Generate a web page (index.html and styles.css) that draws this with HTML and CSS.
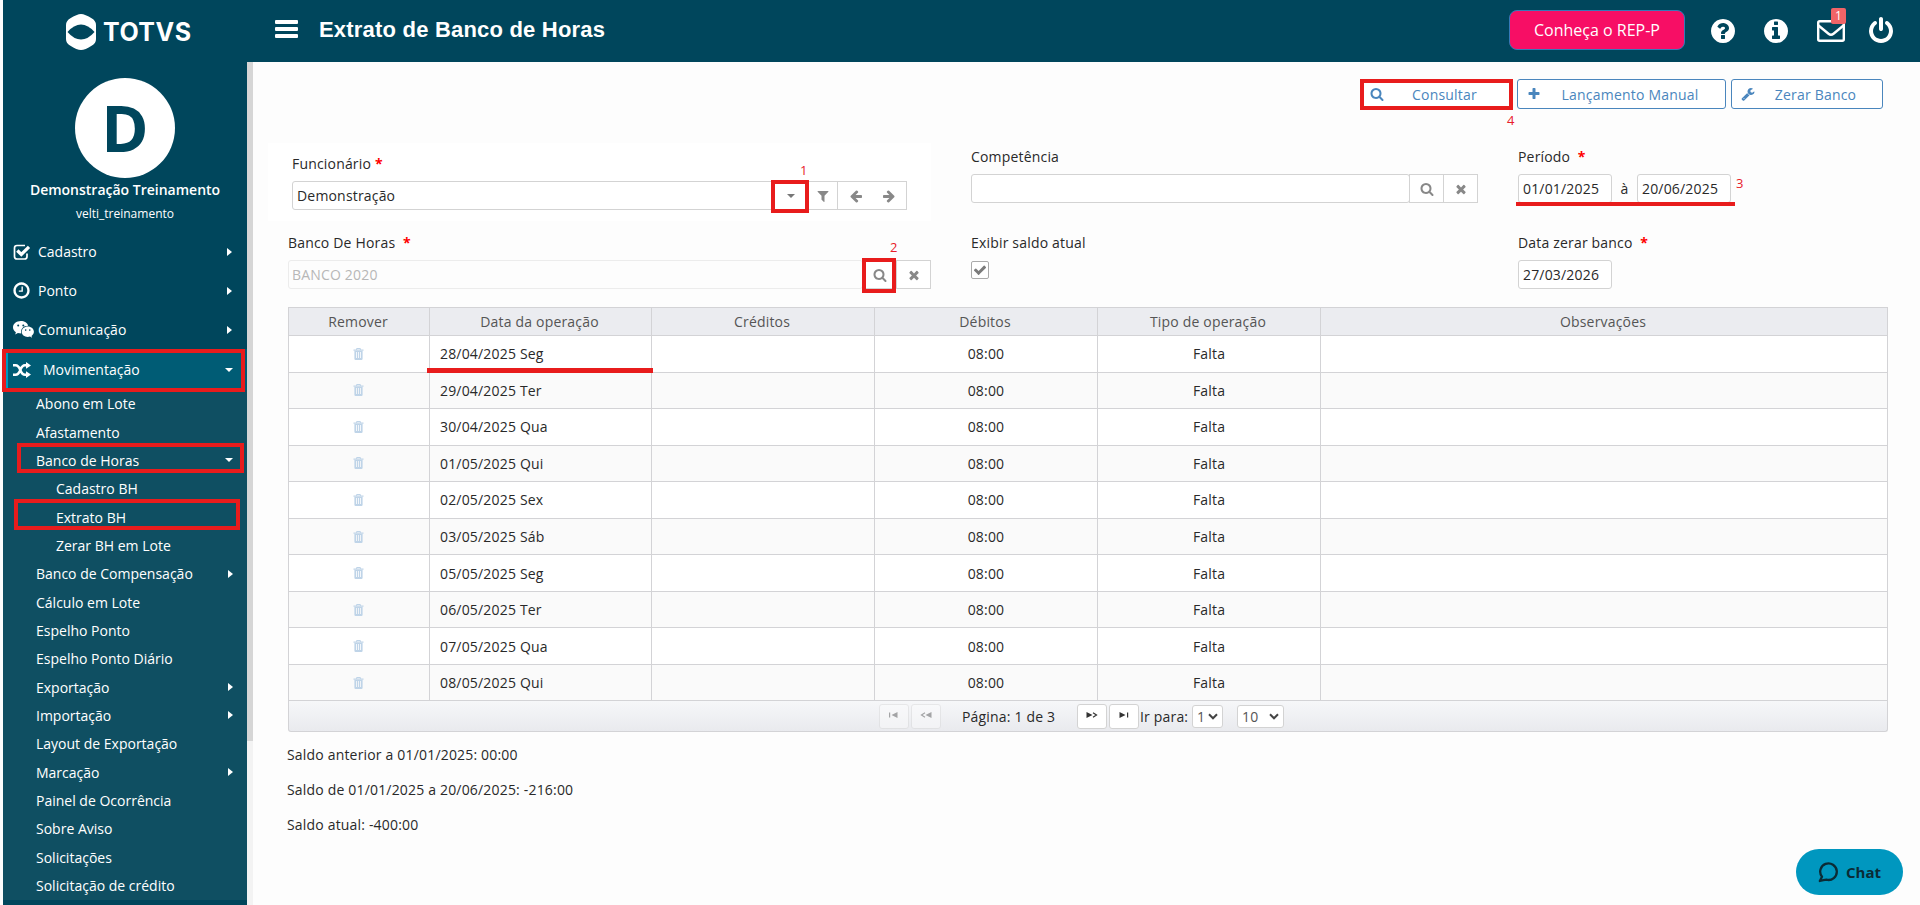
FILE: index.html
```html
<!DOCTYPE html>
<html lang="pt-BR">
<head>
    <meta charset="UTF-8">
    <meta name="viewport" content="width=device-width, initial-scale=1.0">
    <title>Extrato de Banco de Horas</title>
    <link rel="stylesheet" href="styles.css">
</head>
<body>
    <!-- Icons -->
    <svg class="sprite">
        <symbol id="i-search" viewBox="0 0 1792 1792"><path d="M1216 832q0-185-131.5-316.5t-316.5-131.5-316.5 131.5-131.5 316.5 131.5 316.5 316.5 131.5 316.5-131.5 131.5-316.5zm512 832q0 52-38 90t-90 38q-54 0-90-38l-343-342q-179 124-399 124-143 0-273.5-55.5t-225-150-150-225-55.5-273.5 55.5-273.5 150-225 225-150 273.5-55.5 273.5 55.5 225 150 150 225 55.5 273.5q0 220-124 399l343 343q37 37 37 90z"/></symbol>
        <symbol id="i-plus" viewBox="0 0 1792 1792"><path d="M1600 736v192q0 40-28 68t-68 28h-416v416q0 40-28 68t-68 28h-192q-40 0-68-28t-28-68v-416h-416q-40 0-68-28t-28-68v-192q0-40 28-68t68-28h416v-416q0-40 28-68t68-28h192q40 0 68 28t28 68v416h416q40 0 68 28t28 68z"/></symbol>
        <symbol id="i-times" viewBox="0 0 1792 1792"><path d="M1490 1322q0 40-28 68l-136 136q-28 28-68 28t-68-28l-294-294-294 294q-28 28-68 28t-68-28l-136-136q-28-28-28-68t28-68l294-294-294-294q-28-28-28-68t28-68l136-136q28-28 68-28t68 28l294 294 294-294q28-28 68-28t68 28l136 136q28 28 28 68t-28 68l-294 294 294 294q28 28 28 68z"/></symbol>
        <symbol id="i-filter" viewBox="0 0 1792 1792"><path d="M1595 295q17 41-14 70l-493 493v742q0 42-39 59-13 5-25 5-27 0-45-19l-256-256q-19-19-19-45v-486l-493-493q-31-29-14-70 17-39 59-39h1280q42 0 59 39z"/></symbol>
        <symbol id="i-left" viewBox="0 0 1792 1792"><path d="M1664 896v128q0 53-32.5 90.5t-84.5 37.5h-704l293 294q38 36 38 90t-38 90l-75 76q-37 37-90 37-52 0-91-37l-651-652q-37-37-37-90 0-52 37-91l651-650q38-38 91-38 52 0 90 38l75 74q38 38 38 91t-38 91l-293 293h704q52 0 84.5 37.5t32.5 90.5z"/></symbol>
        <symbol id="i-right" viewBox="0 0 1792 1792"><path d="M1600 960q0 54-37 91l-651 651q-39 37-91 37-51 0-90-37l-75-75q-38-38-38-91t38-91l293-293h-704q-52 0-84.5-37.5t-32.5-90.5v-128q0-53 32.5-90.5t84.5-37.5h704l-293-294q-38-36-38-90t38-90l75-75q38-38 90-38 53 0 91 38l651 651q37 35 37 90z"/></symbol>
        <symbol id="i-power" viewBox="0 0 1792 1792"><path d="M1664 896q0 156-61 298t-164 245-245 164-298 61-298-61-245-164-164-245-61-298q0-182 80.5-343t226.5-270q43-32 95.5-25t83.5 50q32 42 24.5 94.5t-49.5 84.5q-98 74-151.5 181t-53.5 228q0 104 40.5 198.5t109.5 163.5 163.5 109.5 198.5 40.5 198.5-40.5 163.5-109.5 109.5-163.5 40.5-198.5q0-121-53.5-228t-151.5-181q-42-32-49.5-84.5t24.5-94.5q31-43 84-50t95 25q146 109 226.5 270t80.5 343zm-640-768v640q0 52-38 90t-90 38-90-38-38-90v-640q0-52 38-90t90-38 90 38 38 90z"/></symbol>
        <symbol id="i-help" viewBox="0 0 1792 1792"><path d="M1024 1376v-192q0-14-9-23t-23-9h-192q-14 0-23 9t-9 23v192q0 14 9 23t23 9h192q14 0 23-9t9-23zm256-672q0-88-55.5-163t-138.5-116-170-41q-243 0-371 213-15 24 8 42l132 100q7 6 19 6 16 0 25-12 53-68 86-92 34-24 86-24 48 0 85.5 26t37.5 59q0 38-20 61t-68 45q-63 28-115.5 86.5t-52.5 125.5v36q0 14 9 23t23 9h192q14 0 23-9t9-23q0-19 21.5-49.5t54.5-49.5q32-18 49-28.5t46-35 44.5-48 28-60.5 12.5-81zm384 192q0 209-103 385.5t-279.5 279.5-385.5 103-385.5-103-279.5-279.5-103-385.5 103-385.5 279.5-279.5 385.5-103 385.5 103 279.5 279.5 103 385.5z"/></symbol>
        <symbol id="i-info" viewBox="0 0 1792 1792"><path d="M1152 1376v-160q0-14-9-23t-23-9h-96v-512q0-14-9-23t-23-9h-320q-14 0-23 9t-9 23v160q0 14 9 23t23 9h96v320h-96q-14 0-23 9t-9 23v160q0 14 9 23t23 9h448q14 0 23-9t9-23zm-128-896v-160q0-14-9-23t-23-9h-192q-14 0-23 9t-9 23v160q0 14 9 23t23 9h192q14 0 23-9t9-23zm640 416q0 209-103 385.5t-279.5 279.5-385.5 103-385.5-103-279.5-279.5-103-385.5 103-385.5 279.5-279.5 385.5-103 385.5 103 279.5 279.5 103 385.5z"/></symbol>
        <symbol id="i-wrench" viewBox="0 0 1792 1792"><path d="M448 1472q0-26-19-45t-45-19-45 19-19 45 19 45 45 19 45-19 19-45zm644-420l-682 682q-37 37-90 37-52 0-91-37l-106-108q-38-36-38-90 0-53 38-91l681-681q39 98 114.5 173.5t173.5 114.5zm634-435q0 39-23 106-47 134-164.5 217.5t-258.5 83.5q-185 0-316.5-131.5t-131.5-316.5 131.5-316.5 316.5-131.5q58 0 121.5 16.5t107.5 46.5q16 11 16 28t-16 28l-293 169v224l193 107q5-3 79-48.5t135.5-81 70.5-35.5q15 0 23.5 10t8.5 25z"/></symbol>
        <symbol id="i-check" viewBox="0 0 1792 1792"><path d="M1671 566q0 40-28 68l-724 724-136 136q-28 28-68 28t-68-28l-136-136-362-362q-28-28-28-68t28-68l136-136q28-28 68-28t68 28l294 295 656-657q28-28 68-28t68 28l136 136q28 28 28 68z"/></symbol>
        <symbol id="i-clock" viewBox="0 0 1792 1792"><path d="M1024 544v448q0 14-9 23t-23 9h-320q-14 0-23-9t-9-23v-64q0-14 9-23t23-9h224v-352q0-14 9-23t23-9h64q14 0 23 9t9 23zm416 352q0-148-73-273t-198-198-273-73-273 73-198 198-73 273 73 273 198 198 273 73 273-73 198-198 73-273zm224 0q0 209-103 385.5t-279.5 279.5-385.5 103-385.5-103-279.5-279.5-103-385.5 103-385.5 279.5-279.5 385.5-103 385.5 103 279.5 279.5 103 385.5z"/></symbol>
        <symbol id="i-trash" viewBox="0 0 10 12"><path fill-rule="evenodd" d="M0 1.5h2.6V1q0-1 1-1h2.8q1 0 1 1v.5H10v1.3H0zM3.6 1.5h2.8V1H3.600zM.9 3h8.200v7.800q0 1.200-1.200 1.200H2.100Q.9 12 .9 10.800zM2.600 4v6h.8V4zM4.600 4v6h.8V4zM6.600 4v6h.8V4z"/></symbol>
    </svg>

    <header class="top-header">
        <div class="logo">
            <svg class="logo-mark" viewBox="0 0 30 36"><path fill="#fff" d="M15 0Q19 0 26 4.500Q30 7 30 11V25Q30 29 26 31.500Q19 36 15 36Q11 36 4 31.500Q0 29 0 25V11Q0 7 4 4.500Q11 0 15 0Z"/><path fill="#00465c" d="M1.500 18Q8 10.500 15 10.500T28.500 18Q22 25.500 15 25.500T1.500 18Z"/></svg>
            <span class="logo-text">TOTVS</span>
        </div>
        <div class="menu-toggle"><span></span><span></span><span></span></div>
        <h1 class="page-title">Extrato de Banco de Horas</h1>
        <a class="rep-btn" href="#">Conheça o REP-P</a>
        <div class="header-icons">
            <svg class="h-icon"><use href="#i-help"/></svg>
            <svg class="h-icon"><use href="#i-info"/></svg>
            <div class="mail">
                <svg width="28" height="22" viewBox="0 0 28 22" fill="none" stroke="#fff" stroke-width="2.400"><rect x="1.200" y="1.200" width="25.600" height="19.600" rx="1.500"/><path d="M1.500 5.500L11.500 13.700Q14 15.700 16.500 13.700L26.500 5.500"/></svg>
                <span class="mail-count">1</span>
            </div>
            <svg class="h-icon power"><use href="#i-power"/></svg>
        </div>
    </header>

    <div class="wrapper">
        <aside class="sidebar">
            <div class="user">
                <div class="avatar">D</div>
                <div class="user-name">Demonstração Treinamento</div>
                <div class="user-login">velti_treinamento</div>
            </div>
            <ul class="menu">
                <li class="has-sub">
                    <svg class="m-icon" viewBox="0 0 17 16" fill="none"><path d="M13.500 9.500V12.500Q13.500 15 11 15H3.500Q1 15 1 12.500V4Q1 1.500 3.500 1.500H11.500" stroke="#fff" stroke-width="1.700"/><path d="M3.800 6.500L7.800 10.500L15.500 2.800" stroke="#fff" stroke-width="3.200"/></svg>Cadastro</li>
                <li class="has-sub"><svg class="m-icon clock"><use href="#i-clock"/></svg>Ponto</li>
                <li class="has-sub">
                    <svg class="m-icon chat" viewBox="0 0 21 17"><path fill="#fff" d="M7.800 0C3.500 0 0 2.800 0 6.300c0 2 1.100 3.700 2.900 4.900L2.200 13.500l2.700-1.400q1.700.4 3.400.4C7 8 10.500 4.600 15.200 4.700 14.500 1.900 11.400 0 7.800 0zM14.800 5.500c-3.400 0-6.100 2.300-6.100 5.200s2.700 5.200 6.100 5.200q1.100 0 2.200-.3l2.100 1.200-.6-1.900c1.500-1 2.400-2.500 2.400-4.200 0-2.900-2.700-5.200-6.100-5.200z"/><g fill="#00465c"><circle cx="5.200" cy="4.400" r="1"/><circle cx="10.300" cy="4.400" r="1"/><circle cx="12.700" cy="9.100" r=".8"/><circle cx="16.800" cy="9.100" r=".8"/></g></svg>Comunicação</li>
                <li class="active">
                    <svg class="m-icon" viewBox="0 0 18 16"><path d="M0 3.300H2.500Q5.500 3.300 7.300 8T12 12.700H14M0 12.700H2.500Q5.500 12.700 7.300 8T12 3.300H14" fill="none" stroke="#fff" stroke-width="2.500"/><path fill="#fff" d="M13 0L18 3.400L13 6.800zM13 9.200L18 12.600L13 16z"/></svg>Movimentação</li>
            </ul>
            <ul class="submenu">
                <li>Abono em Lote</li>
                <li>Afastamento</li>
                <li class="open">Banco de Horas</li>
                <li class="level3">Cadastro BH</li>
                <li class="level3">Extrato BH</li>
                <li class="level3">Zerar BH em Lote</li>
                <li class="has-sub">Banco de Compensação</li>
                <li>Cálculo em Lote</li>
                <li>Espelho Ponto</li>
                <li>Espelho Ponto Diário</li>
                <li class="has-sub">Exportação</li>
                <li class="has-sub">Importação</li>
                <li>Layout de Exportação</li>
                <li class="has-sub">Marcação</li>
                <li>Painel de Ocorrência</li>
                <li>Sobre Aviso</li>
                <li>Solicitações</li>
                <li>Solicitação de crédito</li>
            </ul>
        </aside>
        <div class="scrollbar"><div class="scrollbar-thumb"></div></div>

        <main class="content">
            <div class="toolbar">
                <button class="btn consultar"><svg><use href="#i-search"/></svg><span>Consultar</span></button>
                <button class="btn manual"><svg><use href="#i-plus"/></svg><span>Lançamento Manual</span></button>
                <button class="btn zerar"><svg><use href="#i-wrench"/></svg><span>Zerar Banco</span></button>
            </div>

            <div class="form">
                <div class="field employee">
                    <label>Funcionário <b>*</b></label>
                    <div class="input-group">
                        <div class="input">Demonstração</div>
                        <div class="addon drop"><i class="caret"></i></div>
                        <div class="addon funnel"><svg><use href="#i-filter"/></svg></div>
                        <div class="addon arrows"><svg><use href="#i-left"/></svg><svg><use href="#i-right"/></svg></div>
                    </div>
                </div>
                <div class="field">
                    <label>Competência</label>
                    <div class="input-group">
                        <div class="input"></div>
                        <div class="addon"><svg><use href="#i-search"/></svg></div>
                        <div class="addon"><svg><use href="#i-times"/></svg></div>
                    </div>
                </div>
                <div class="field">
                    <label>Período &nbsp;<b>*</b></label>
                    <div class="dates">
                        <div class="input date">01/01/2025</div>
                        <span>à</span>
                        <div class="input date">20/06/2025</div>
                    </div>
                </div>
                <div class="field">
                    <label>Banco De Horas &nbsp;<b>*</b></label>
                    <div class="input-group">
                        <div class="input disabled">BANCO 2020</div>
                        <div class="addon"><svg><use href="#i-search"/></svg></div>
                        <div class="addon"><svg><use href="#i-times"/></svg></div>
                    </div>
                </div>
                <div class="field">
                    <label>Exibir saldo atual</label>
                    <div class="checkbox"><svg><use href="#i-check"/></svg></div>
                </div>
                <div class="field">
                    <label>Data zerar banco &nbsp;<b>*</b></label>
                    <div class="input date">27/03/2026</div>
                </div>
            </div>

            <table class="extrato">
                <colgroup><col class="c-rem"><col class="c-data"><col class="c-mid"><col class="c-mid"><col class="c-mid"><col></colgroup>
                <thead>
                    <tr><th>Remover</th><th>Data da operação</th><th>Créditos</th><th>Débitos</th><th>Tipo de operação</th><th>Observações</th></tr>
                </thead>
                <tbody>
                    <tr><td><svg><use href="#i-trash"/></svg></td><td>28/04/2025 Seg</td><td></td><td>08:00</td><td>Falta</td><td></td></tr>
                    <tr><td><svg><use href="#i-trash"/></svg></td><td>29/04/2025 Ter</td><td></td><td>08:00</td><td>Falta</td><td></td></tr>
                    <tr><td><svg><use href="#i-trash"/></svg></td><td>30/04/2025 Qua</td><td></td><td>08:00</td><td>Falta</td><td></td></tr>
                    <tr><td><svg><use href="#i-trash"/></svg></td><td>01/05/2025 Qui</td><td></td><td>08:00</td><td>Falta</td><td></td></tr>
                    <tr><td><svg><use href="#i-trash"/></svg></td><td>02/05/2025 Sex</td><td></td><td>08:00</td><td>Falta</td><td></td></tr>
                    <tr><td><svg><use href="#i-trash"/></svg></td><td>03/05/2025 Sáb</td><td></td><td>08:00</td><td>Falta</td><td></td></tr>
                    <tr><td><svg><use href="#i-trash"/></svg></td><td>05/05/2025 Seg</td><td></td><td>08:00</td><td>Falta</td><td></td></tr>
                    <tr><td><svg><use href="#i-trash"/></svg></td><td>06/05/2025 Ter</td><td></td><td>08:00</td><td>Falta</td><td></td></tr>
                    <tr><td><svg><use href="#i-trash"/></svg></td><td>07/05/2025 Qua</td><td></td><td>08:00</td><td>Falta</td><td></td></tr>
                    <tr><td><svg><use href="#i-trash"/></svg></td><td>08/05/2025 Qui</td><td></td><td>08:00</td><td>Falta</td><td></td></tr>
                </tbody>
            </table>
            <div class="pager">
                <span class="page-btn off"><svg viewBox="0 0 12 8"><path d="M1 1.500h1.200v5H1zM9.500 1v6L3.500 4z"/></svg></span>
                <span class="page-btn off"><svg viewBox="0 0 12 8"><path d="M11.500 1v6L5.500 4z"/><path d="M5 1.800L1.500 4L5 6.200" fill="none" stroke="#333" stroke-width="1.200"/></svg></span>
                <span class="page-info">Página: 1 de 3</span>
                <span class="page-btn"><svg viewBox="0 0 12 8"><path d="M.5 1v6L6.500 4z"/><path d="M7 1.800L10.500 4L7 6.200" fill="none" stroke="#333" stroke-width="1.200"/></svg></span>
                <span class="page-btn"><svg viewBox="0 0 12 8"><path d="M1.500 1v6L7.500 4zM9 1.500h1.200v5H9z"/></svg></span>
                <span class="goto">Ir para:</span>
                <span class="select">1<svg viewBox="0 0 10 7"><path d="M1 1.300L5 5.300L9 1.300"/></svg></span>
                <span class="select rows">10<svg viewBox="0 0 10 7"><path d="M1 1.300L5 5.300L9 1.300"/></svg></span>
            </div>

            <div class="totals">
                <p>Saldo anterior a 01/01/2025: 00:00</p>
                <p>Saldo de 01/01/2025 a 20/06/2025: -216:00</p>
                <p>Saldo atual: -400:00</p>
            </div>
        </main>
    </div>

    <a class="chat-btn" href="#">
        <svg width="20" height="22" viewBox="0 0 20 22" fill="none" stroke="#0b2b35" stroke-width="2.300" stroke-linejoin="round"><path d="M1.800 20L4 15.800A8.300 8.300 0 1 1 8.500 18.700Q5.500 19 1.800 20Z"/></svg>
        Chat
    </a>

    <!-- Step marks -->
    <div class="mark mark-mov"></div>
    <div class="mark mark-banco"></div>
    <div class="mark mark-extrato"></div>
    <div class="mark mark-drop"></div>
    <div class="mark mark-search"></div>
    <div class="mark mark-consultar"></div>
    <div class="line line-periodo"></div>
    <div class="line line-data"></div>
    <span class="step step1">1</span>
    <span class="step step2">2</span>
    <span class="step step3">3</span>
    <span class="step step4">4</span>
</body>
</html>
```
FILE: styles.css
```css
* {
    box-sizing: border-box;
    padding: 0;
    margin: 0;
}
body {
    width: 1920px;
    height: 905px;
    overflow: hidden;
    position: relative;
    padding-left: 3px;
    background: #fdfdfd;
    font-family: "Open Sans", "Noto Sans", sans-serif;
    font-size: 14px;
    color: #292929;
}
a {
    text-decoration: none;
}
ul {
    list-style: none;
}
.sprite {
    display: none;
}

/* Header */
.top-header {
    height: 62px;
    background: #00465c;
    display: flex;
    align-items: center;
    color: white;
}
.logo {
    width: 244px;
    padding-left: 63px;
    display: flex;
    align-items: center;
    gap: 7px;
}
.logo-mark {
    width: 30px;
    height: 36px;
    margin-top: 2px;
}
.logo-text {
    font-family: Inter, sans-serif;
    font-weight: 700;
    font-size: 25px;
    line-height: 30px;
    letter-spacing: 0.5px;
    margin-top: 2px;
}
.menu-toggle {
    width: 23px;
    margin: -4px 0 0 28px;
    display: flex;
    flex-direction: column;
    gap: 3px;
}
.menu-toggle span {
    height: 4px;
    background: white;
    border-radius: 1px;
}
.page-title {
    font-family: "Liberation Sans", Arial, sans-serif;
    font-size: 22px;
    font-weight: bold;
    line-height: 26px;
    letter-spacing: 0.2px;
    margin: -2px 0 0 21px;
}
.rep-btn {
    width: 176px;
    height: 40px;
    margin: -2px 26px 0 auto;
    line-height: 38px;
    text-align: center;
    font-size: 16px;
    color: white;
    background: #f70e65;
    border: 1px solid #3579b7;
    border-radius: 8px;
}
.header-icons {
    width: 209px;
    display: flex;
    align-items: center;
}
.h-icon {
    width: 28px;
    height: 28px;
    margin-right: 25px;
    margin-left: -2px;
    fill: white;
}
.header-icons .h-icon + .h-icon {
    margin-left: 0;
}
.mail {
    position: relative;
    width: 28px;
    height: 22px;
    margin-left: 2px;
}
.mail svg {
    display: block;
}
.mail-count {
    position: absolute;
    left: 14px;
    top: -12px;
    width: 15px;
    height: 16px;
    background: #f06467;
    border-radius: 2px;
    font-size: 12px;
    line-height: 16px;
    text-align: center;
}
.header-icons .power {
    margin: -1px 0 0 22px;
}

/* Sidebar */
.wrapper {
    display: flex;
    height: 843px;
}
.sidebar {
    width: 244px;
    background: #00465c;
    color: white;
}
.user {
    height: 170px;
    padding-top: 16px;
    display: flex;
    flex-direction: column;
    align-items: center;
}
.avatar {
    width: 100px;
    height: 100px;
    border-radius: 50%;
    background: white;
    color: #00465c;
    font-size: 64px;
    font-weight: bold;
    line-height: 100px;
    text-align: center;
}
.user-name {
    font-weight: 600;
    line-height: 20px;
    margin-top: 2px;
}
.user-login {
    font-size: 12px;
    line-height: 20px;
    margin-top: 4px;
}
.menu li {
    height: 39px;
    padding: 0 15px 0 10px;
    display: flex;
    align-items: center;
}
.m-icon {
    width: 18px;
    height: 16px;
    margin-right: 7px;
}
.m-icon.clock {
    width: 19px;
    height: 19px;
    margin: 0 7px 0 -1px;
    fill: white;
}
.m-icon.chat {
    width: 21px;
    height: 17px;
    margin-right: 4px;
}
.has-sub::after,
.active::after,
.open::after {
    content: "";
    margin-left: auto;
    border: 4px solid transparent;
    border-left: 5px solid white;
    border-right: 0;
}
.menu .active {
    height: 41px;
    background: #005c75;
    border-left: 5px solid #009abf;
    padding: 0 14px 0 5px;
}
.active .m-icon {
    margin-right: 12px;
}
.active::after,
.open::after {
    border: 4px solid transparent;
    border-top: 4px solid white;
    border-bottom: 0;
}
.submenu {
    background: #0f4f62;
}
.submenu li {
    height: 28.350px;
    padding: 0 14px 1px 33px;
    display: flex;
    align-items: center;
}
.submenu .level3 {
    padding-left: 53px;
}
.scrollbar {
    width: 6px;
    background: #f3f3f3;
}
.scrollbar-thumb {
    height: 679px;
    background: #d6d6d6;
}

/* Content */
.content {
    flex-grow: 1;
    padding: 17px 32px 0 35px;
    letter-spacing: 0.18px;
}
.toolbar {
    display: flex;
    justify-content: flex-end;
    padding-right: 5px;
    gap: 5px;
    height: 31px;
}
.btn {
    display: flex;
    align-items: center;
    height: 30px;
    background: white;
    border: 1px solid #4a86bd;
    border-radius: 3px;
    color: #4a86bd;
    font-family: inherit;
    font-size: 14px;
    letter-spacing: 0.2px;
    padding: 0 6px 0 9px;
}
.btn svg {
    width: 14px;
    height: 14px;
    fill: #4a86bd;
}
.btn span {
    flex-grow: 1;
    text-align: center;
}
.consultar {
    width: 152px;
}
.manual {
    width: 209px;
}
.zerar {
    width: 152px;
}
.form {
    margin-top: 37px;
    display: grid;
    grid-template-columns: 643px 507px 1fr;
    column-gap: 40px;
    row-gap: 30px;
    height: 142px;
    grid-template-rows: 56px 56px;
}
.field label {
    display: block;
    line-height: 20px;
    margin-bottom: 7px;
}
.field b {
    color: red;
}
.employee {
    height: 78px;
    margin: -4px 0 0 -20px;
    padding: 11px 24px 0 24px;
    background: white;
}
.input-group {
    display: flex;
}
.input {
    flex-grow: 1;
    height: 29px;
    line-height: 27px;
    padding-left: 4px;
    background: white;
    border: 1px solid #d3d3d3;
    border-radius: 3px;
}
.disabled {
    background: #fdfdfd;
    border-color: #ececec;
    color: #b7b7b7;
    padding-left: 3px;
}
.date {
    width: 94px;
    flex-grow: 0;
}
.dates {
    display: flex;
}
.dates span {
    width: 25px;
    text-align: center;
    line-height: 29px;
}
.addon {
    width: 35px;
    height: 29px;
    margin-left: -1px;
    background: white;
    border: 1px solid #d3d3d3;
    display: flex;
    align-items: center;
    justify-content: center;
}
.addon svg {
    width: 14px;
    height: 14px;
    fill: #888;
}
.caret {
    border: 4px solid transparent;
    border-top: 4px solid #777;
    border-bottom: 0;
}
.funnel {
    width: 31px;
}
.arrows {
    width: 70px;
    gap: 19px;
}
.checkbox {
    width: 18px;
    height: 18px;
    margin-top: 8px;
    background: white;
    border: 1px solid #aaa;
    border-radius: 2px;
    display: flex;
    align-items: center;
    justify-content: center;
}
.checkbox svg {
    width: 14px;
    height: 14px;
    fill: #7b7b7b;
}

/* Table */
.extrato {
    width: 1600px;
    margin-top: 18px;
    table-layout: fixed;
    border-spacing: 0;
    border-left: 1px solid #d3d3d6;
    border-top: 1px solid #d3d3d6;
}
.c-rem {
    width: 141px;
}
.c-data {
    width: 222px;
}
.c-mid {
    width: 223px;
}
.extrato th,
.extrato td {
    border-right: 1px solid #d3d3d6;
    border-bottom: 1px solid #d3d3d6;
    text-align: center;
    vertical-align: middle;
}
.extrato th {
    height: 28px;
    padding-right: 2px;
    font-weight: normal;
    color: #555;
    background: #ebecf0;
}
.extrato td {
    height: 36.550px;
    background: white;
}
.extrato td:first-child {
    padding-right: 2px;
}
.extrato td:nth-child(2) {
    text-align: left;
    padding-left: 10px;
}
.extrato tr:nth-child(even) td {
    background: #fafafa;
}
.extrato svg {
    display: block;
    width: 11px;
    height: 12px;
    margin: 0 auto;
    fill: #bfd4e8;
}
.pager {
    width: 1600px;
    height: 31px;
    padding-left: 590px;
    display: flex;
    align-items: center;
    background: linear-gradient(#f6f7f9, #e9eaee);
    border: 1px solid #d3d3d6;
    border-top: 0;
    border-radius: 0 0 3px 3px;
}
.page-btn {
    width: 30px;
    height: 25px;
    margin-right: 2px;
    background: white;
    border: 1px solid #d3d3d3;
    border-radius: 3px;
    display: flex;
    align-items: center;
    justify-content: center;
}
.page-btn svg {
    width: 12px;
    height: 8px;
    fill: #333;
    margin-bottom: 3px;
}
.page-btn.off {
    opacity: 0.4;
}
.page-info {
    width: 134px;
    padding-left: 19px;
}
.goto {
    width: 52px;
    margin-left: -1px;
}
.select {
    width: 31px;
    height: 23px;
    padding: 0 4px;
    background: white;
    border: 1px solid #d3d3d3;
    border-radius: 3px;
    color: #555;
    display: flex;
    align-items: center;
    justify-content: space-between;
}
.select svg {
    width: 10px;
    height: 7px;
    fill: none;
    stroke: #444;
    stroke-width: 2;
}
.rows {
    width: 47px;
    margin-left: 14px;
}
.totals {
    margin-top: 13px;
    margin-left: -1px;
}
.totals p {
    line-height: 20px;
    margin-bottom: 15px;
}
.chat-btn {
    position: absolute;
    left: 1796px;
    top: 849px;
    width: 107px;
    height: 46px;
    border-radius: 23px;
    background: #0097bf;
    color: #0b2b35;
    font-weight: bold;
    font-size: 15px;
    display: flex;
    align-items: center;
    gap: 8px;
    padding-left: 22px;
}

/* Step marks */
.mark {
    position: absolute;
    border: 4px solid #e81c1c;
}
.line {
    position: absolute;
    background: #e81c1c;
}
.step {
    position: absolute;
    color: #e8202a;
    font-size: 13px;
    line-height: 14px;
}
.mark-mov {
    left: 2px;
    top: 349px;
    width: 243px;
    height: 43px;
}
.mark-banco {
    left: 17px;
    top: 443px;
    width: 227px;
    height: 30px;
}
.mark-extrato {
    left: 14px;
    top: 499px;
    width: 226px;
    height: 31px;
}
.mark-drop {
    left: 771px;
    top: 180px;
    width: 38px;
    height: 33px;
}
.mark-search {
    left: 862px;
    top: 258px;
    width: 34px;
    height: 35px;
}
.mark-consultar {
    left: 1360px;
    top: 79px;
    width: 153px;
    height: 31px;
}
.line-periodo {
    left: 1516px;
    top: 202px;
    width: 219px;
    height: 4px;
}
.line-data {
    left: 427px;
    top: 368px;
    width: 226px;
    height: 5px;
}
.step1 {
    left: 800px;
    top: 163px;
}
.step2 {
    left: 890px;
    top: 240px;
}
.step3 {
    left: 1736px;
    top: 176px;
}
.step4 {
    left: 1507px;
    top: 113px;
}
```
